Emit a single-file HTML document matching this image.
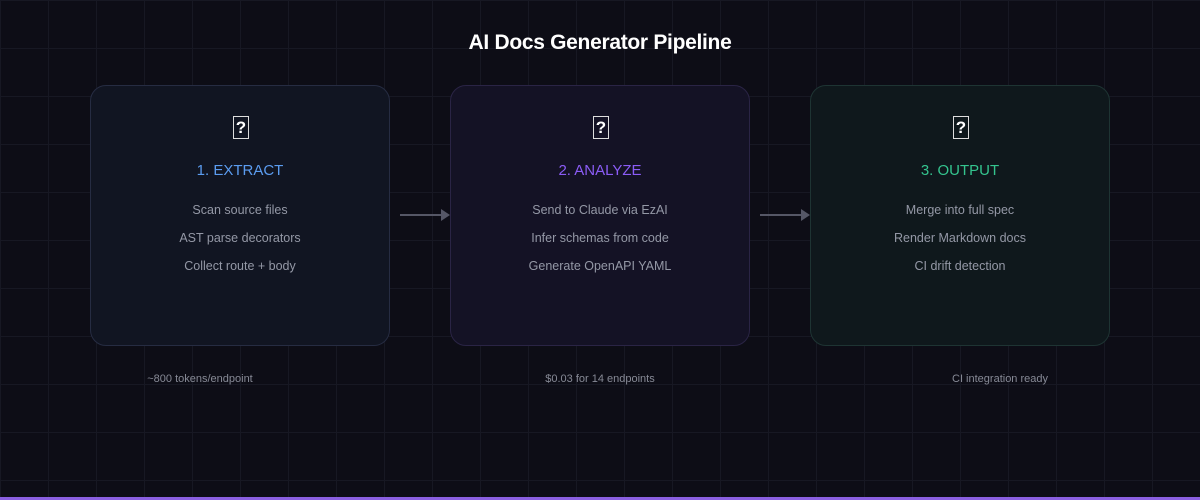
<!DOCTYPE html>
<html><head><meta charset="utf-8"><style>
html,body{margin:0;padding:0}
body{width:1200px;height:500px;position:relative;overflow:hidden;background:#0d0d16;
background-image:linear-gradient(to right,#171823 1px,transparent 1px),linear-gradient(to bottom,#171823 1px,transparent 1px);
background-size:48px 48px;background-position:0 0;font-family:"Liberation Sans",sans-serif}
.t{position:absolute;left:0;width:1200px;top:31px;text-align:center;color:#fff;font-size:21px;font-weight:bold;letter-spacing:-0.3px}
.card{position:absolute;top:85px;width:300px;height:261px;border-radius:16px;box-sizing:border-box;text-align:center}
.c1{left:90px;background:#111522;border:1px solid #262c42}
.c2{left:450px;background:#141225;border:1px solid #2a2445}
.c3{left:810px;background:#0f181c;border:1px solid #1e3433}
.ic{position:absolute;left:142px;top:30px;width:14px;height:21px;border:1px solid #ddd;color:#fff;font-size:17px;font-weight:bold;line-height:21px}
.h{position:absolute;left:0;right:0;top:76px;font-size:15px}
.l{position:absolute;left:0;right:0;font-size:12.5px;color:#9498a6}
.ar{position:absolute;top:214px;width:42px;height:2px;background:#555766}
.ar:after{content:"";position:absolute;right:-8px;top:-5px;border-left:9px solid #555766;border-top:6px solid transparent;border-bottom:6px solid transparent}
.n{position:absolute;top:373px;font-size:11px;color:#878a96;text-align:center;width:200px}
.bar{position:absolute;left:0;bottom:0;width:1200px;height:3px;background:#8a5fe0}
</style></head><body>
<div class="t">AI Docs Generator Pipeline</div>
<div class="card c1"><div class="ic">?</div><div class="h" style="color:#5b9cf0">1. EXTRACT</div>
<div class="l" style="top:117px">Scan source files</div><div class="l" style="top:145px">AST parse decorators</div><div class="l" style="top:173px">Collect route + body</div></div>
<div class="card c2"><div class="ic">?</div><div class="h" style="color:#8b5cf6">2. ANALYZE</div>
<div class="l" style="top:117px">Send to Claude via EzAI</div><div class="l" style="top:145px">Infer schemas from code</div><div class="l" style="top:173px">Generate OpenAPI YAML</div></div>
<div class="card c3"><div class="ic">?</div><div class="h" style="color:#34c48e">3. OUTPUT</div>
<div class="l" style="top:117px">Merge into full spec</div><div class="l" style="top:145px">Render Markdown docs</div><div class="l" style="top:173px">CI drift detection</div></div>
<div class="ar" style="left:400px"></div>
<div class="ar" style="left:760px"></div>
<div class="n" style="left:100px">~800 tokens/endpoint</div>
<div class="n" style="left:500px">$0.03 for 14 endpoints</div>
<div class="n" style="left:900px">CI integration ready</div>
<div class="bar"></div>
</body></html>
